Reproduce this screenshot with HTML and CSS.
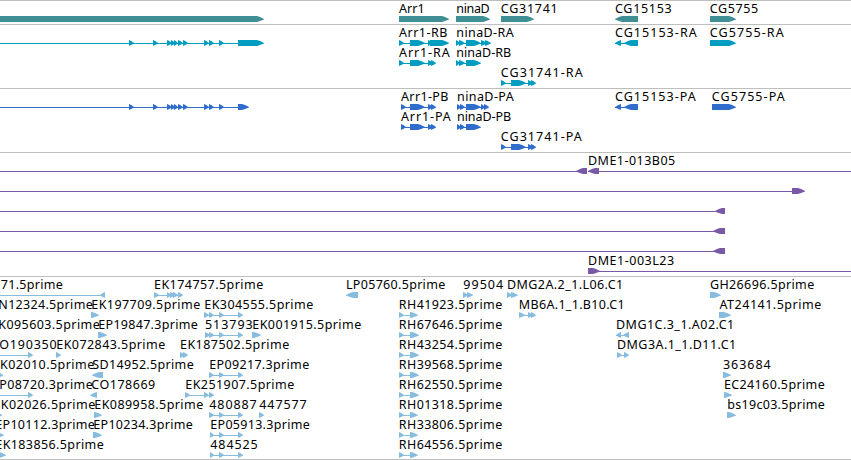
FILE: index.html
```html
<!DOCTYPE html>
<html lang="en">
<head>
<meta charset="utf-8">
<title>Genome tracks</title>
<link rel="stylesheet" href="styles.css">
</head>
<body>
<main class="browser" id="browser"></main>
<script src="tracks.js"></script>
</body>
</html>
```

FILE: styles.css
```css
body {
  margin: 0;
  background: #fff;
}

.browser {
  display: flex;
  flex-direction: column;
  width: 851px;
  height: 460px;
  overflow: hidden;
}

.track {
  display: flex;
  flex-direction: column;
  flex: none;
  box-sizing: border-box;
  border-top: 1px solid #bebebe;
  padding-bottom: 3px;
}

.track-est {
  padding-bottom: 2px;
  border-bottom: 1px solid #bebebe;
}

.row {
  display: block;
  flex: none;
  width: 851px;
  height: 20px;
  overflow: visible;
}

.row text {
  font: 12.5px "Noto Sans", "DejaVu Sans", sans-serif;
  fill: #000;
}

.track-gene { color: #3f8f95; }
.track-transcript { color: #009dc0; }
.track-protein { color: #306ccb; }
.track-bac { color: #7759a7; }
.track-est { color: #88bcdf; }

.shape { fill: currentColor; }
```

FILE: tracks.js
```
// Feature: [label, labelStart, labelEnd, direction, exons, lineStart, lineEnd]
const small = [[129,134],[153,158],[167,172],[171,175],[174,178],[178,183],[183,188],[204,209],[209,214],[219,224]];
const rh = (name, tip) => [name + '.5prime', 399.5, 501.5, 1, [[399,404],[410,tip]]];
const ep = (start) => [[start,214],[219,224],[238,243]];

const tracks = [
  ['gene', [[
    ['', 0, 0, 1, [[-9,264]]],
    ['Arr1', 399, 424, 1, [[399,449]]],
    ['ninaD', 457, 489, 1, [[456,490]]],
    ['CG31741', 501.5, 557, 1, [[501,534]]],
    ['CG15153', 615.7, 671, -1, [[615,638]]],
    ['CG5755', 710.5, 757.5, 1, [[710,736]]]
  ]]],
  ['transcript', [[
    ['', 0, 0, 1, [...small, [238,264]], 0],
    ['Arr1-RB', 399, 446.7, 1, [[399,404],[410,425],[428,433],[430,449]]],
    ['ninaD-RA', 457, 513, 1, [[456,460],[459,465],[466,481],[481,487],[485,491]]],
    ['CG15153-RA', 615.7, 696, -1, [[615,621],[624,638]]],
    ['CG5755-RA', 710.5, 783, 1, [[710,736]]]
  ], [
    ['Arr1-RA', 399, 449, 1, [[399,404],[410,425],[428,433],[431,436]]],
    ['ninaD-RB', 457, 510.5, 1, [[456,460],[459,465],[466,481]]]
  ], [
    ['CG31741-RA', 501.5, 582, 1, [[501,506],[511,526],[528,533],[531,536]]]
  ]]],
  ['protein', [[
    ['', 0, 0, 1, [...small, [238,249]], 0],
    ['Arr1-PB', 401, 447.7, 1, [[401,406],[410,425],[428,433],[431,436]]],
    ['ninaD-PA', 457.7, 513, 1, [[457,461],[460,465],[466,481],[481,485],[484,489]]],
    ['CG15153-PA', 615.7, 695, -1, [[615,621],[624,638]]],
    ['CG5755-PA', 712.5, 784, 1, [[712,736]]]
  ], [
    ['Arr1-PA', 401, 450, 1, [[401,406],[410,425],[428,433],[431,436]]],
    ['ninaD-PB', 457.7, 510.5, 1, [[457,461],[460,465],[466,481]]]
  ], [
    ['CG31741-PA', 501.5, 581, 1, [[501,506],[511,526],[528,533],[531,536]]]
  ]]],
  ['bac', [[
    ['', 0, 0, -1, [[576,587]], 0],
    ['DME1-013B05', 588.7, 674.5, -1, [[588,599]], 588, 852]
  ], [
    ['', 0, 0, 1, [[792,805]], 0]
  ], [
    ['', 0, 0, -1, [[715,725]], 0]
  ], [
    ['', 0, 0, -1, [[713,725]], 0]
  ], [
    ['', 0, 0, -1, [[713,725]], 0]
  ], [
    ['DME1-003L23', 588.7, 673.5, 1, [[588,600]], 588, 852]
  ]]],
  ['est', [[
    ['71.5prime', 1.5, 62, -1, [[100,105]], 0],
    ['EK174757.5prime', 154.7, 262.5, 1, [[154,159],[167,171],[170,175],[173,178],[178,183]]],
    ['LP05760.5prime', 346.7, 444.5, -1, [[346,358]]],
    ['99504', 464, 502.5, 1, [[463,468],[467,473]]],
    ['DMG2A.2_1.L06.C1', 507.7, 622.5, 1, [[507,512],[511,518]]],
    ['GH26696.5prime', 710.7, 813.5, 1, [[710,721]]]
  ], [
    ['N12324.5prime', -1, 92, 1, []],
    ['EK197709.5prime', 92, 199.5, 1, [[91,99]]],
    ['EK304555.5prime', 205, 312.5, 1, [[204,209],[209,214],[219,224],[238,243]]],
    rh('RH41923', 418),
    ['MB6A.1_1.B10.C1', 519.5, 624, 1, [[519,525],[528,533],[531,536]]],
    ['AT24141.5prime', 719.5, 820.5, 1, [[719,731]]]
  ], [
    ['K095603.5prime', -1, 99, 1, []],
    ['EP19847.3prime', 99, 197, 1, [[98,107]]],
    ['513793', 205.7, 252, 1, [[205,210],[209,214],[219,224],[238,243]]],
    ['EK001915.5prime', 253, 360.5, 1, [[252,261]]],
    rh('RH67646', 419),
    ['DMG1C.3_1.A02.C1', 616.7, 733.5, -1, [[616,621],[623,629]]]
  ], [
    ['O190350', 0, 56, 1, [[28,33]], 0],
    ['EK072843.5prime', 57, 164.5, 1, [[56,61]]],
    ['EK187502.5prime', 180.7, 288.5, 1, [[180,185],[183,188]]],
    rh('RH43254', 419),
    ['DMG3A.1_1.D11.C1', 617.7, 735.5, 1, [[617,622],[624,629]]]
  ], [
    ['K02010.5prime', 0.7, 93.5, 1, [[-2,3]]],
    ['SD14952.5prime', 93, 193, -1, [[92,103]]],
    ['EP09217.3prime', 210, 308.5, 1, ep(209)],
    rh('RH39568', 419),
    ['363684', 723.7, 770, 1, [[723,731]]]
  ], [
    ['P08720.3prime', 0, 92, 1, [[28,33]], 0],
    ['CO178669', 92, 154.5, -1, [[90,97]]],
    ['EK251907.5prime', 186, 293.5, 1, [[185,190],[204,209],[209,214]]],
    rh('RH62550', 419),
    ['EC24160.5prime', 724.7, 824, 1, [[724,732]]]
  ], [
    ['K02026.5prime', 1.5, 94.5, 1, [[-3,2]]],
    ['EK089958.5prime', 95, 202.5, 1, [[94,102]]],
    ['480887', 210, 256, 1, ep(209)],
    ['447577', 260, 306, 1, [[259,264]]],
    rh('RH01318', 418),
    ['bs19c03.5prime', 728, 824, 1, [[727,736]]]
  ], [
    ['EP10112.3prime', -4, 94, 1, [[-8,4]]],
    ['EP10234.3prime', 94, 192, 1, [[93,102]]],
    ['EP05913.3prime', 211, 309, 1, ep(210)],
    rh('RH33806', 418)
  ], [
    ['EK183856.5prime', -4, 103, 1, [[-5,6]]],
    ['484525', 211, 257, 1, ep(210)],
    rh('RH64556', 418)
  ]]]
];

// Block that tapers to a point on the side given by the direction.
function exon([a, b], dir) {
  const head = Math.min(b - a, 7);
  const tip = dir > 0 ? b : a;
  const back = dir > 0 ? a : b;
  const neck = tip - dir * head;
  return `<polygon class="shape" points="${back},15 ${neck},15 ${neck + dir * head * 0.45},16 ${tip},18 ${tip},18.6 ${neck + dir * head * 0.45},20 ${neck},21 ${back},21"/>`;
}

function feature([label, start, end, dir, exons, from, to]) {
  let out = '';
  if (exons.length) {
    const a = from ?? exons[0][0];
    const b = to ?? exons[exons.length - 1][1];
    if (from !== undefined || exons.length > 1) {
      out += `<rect class="shape" x="${a}" y="18" width="${b - a - 1}" height="1"/>`;
    }
    out += exons.map(e => exon(e, dir)).join('');
  }
  if (label) {
    const bearing = /^A/.test(label) ? 0 : 0.7;
    out += `<text x="${start - bearing}" y="12" textLength="${end - start + bearing + 0.7}">${label}</text>`;
  }
  return out;
}

document.getElementById('browser').innerHTML = tracks.map(([kind, rows]) =>
  `<section class="track track-${kind}">${rows.map(row =>
    `<svg class="row" viewBox="0 0 851 20">${row.map(feature).join('')}</svg>`).join('')}</section>`
).join('');
```
